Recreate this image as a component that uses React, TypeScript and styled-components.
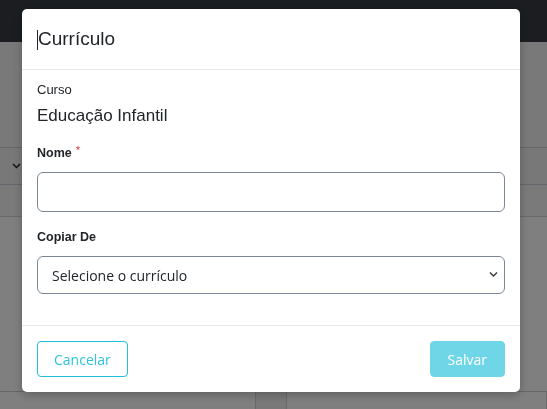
import React from 'react';
import styled, { createGlobalStyle } from 'styled-components';

const GlobalStyle = createGlobalStyle`
  html, body {
    margin: 0;
    padding: 0;
    height: 100%;
  }
  body {
    font-family: "Liberation Sans", Arial, sans-serif;
    color: #212529;
    background: #ffffff;
    overflow: hidden;
  }
`;

const Page = styled.div`
  display: flex;
  flex-direction: column;
  height: 409px;
`;

const Navbar = styled.div`
  height: 42px;
  background: #363b41;
`;

const PageHeader = styled.div`
  height: 105px;
  background: #f3f3f3;
  border-bottom: 1px solid #c6ced6;
`;

const Toolbar = styled.div`
  height: 36px;
  display: flex;
  align-items: center;
  padding-left: 12px;
  background: #f1f1f1;
  border-bottom: 1px solid #c6ced6;
  color: #333;
`;

const FilterRow = styled.div`
  height: 31px;
  background: #f5f5f5;
  border-bottom: 1px solid #d0d5da;
`;

const Content = styled.div`
  flex: 1;
  display: flex;
  flex-direction: column;
  justify-content: flex-end;
  background: #ffffff;
`;

const TableRow = styled.div`
  height: 17px;
  display: grid;
  grid-template-columns: 256px 31px 1fr;
  border-top: 1px solid #cfcfcf;
`;

const TableCell = styled.div<{ $shade?: boolean }>`
  background: ${p => (p.$shade ? '#f3f3f3' : '#ffffff')};
  border-right: 1px solid #d4d4d4;
`;

const Backdrop = styled.div`
  position: fixed;
  inset: 0;
  background: rgba(0, 0, 0, 0.5);
  display: flex;
  align-items: flex-start;
`;

const Modal = styled.div`
  width: 498px;
  margin: 9px 0 0 22px;
  background: #ffffff;
  border-radius: 5px;
  box-shadow: 0 3px 10px rgba(0, 0, 0, 0.25);
  display: flex;
  flex-direction: column;
`;

const ModalHeader = styled.div`
  height: 60px;
  display: flex;
  align-items: center;
  padding: 0 15px;
  border-bottom: 1px solid #e9ecef;
`;

const Caret = styled.span`
  width: 1px;
  height: 20px;
  background: #212529;
  margin-top: 2px;
`;

const Title = styled.h5`
  margin: 0;
  font-size: 19px;
  font-weight: 400;
  line-height: 28px;
  color: #212529;
`;

const ModalBody = styled.div`
  display: flex;
  flex-direction: column;
  padding: 12px 15px 31px;
`;

const SmallLabel = styled.div`
  font-size: 13px;
  line-height: 16px;
  color: #212529;
`;

const ValueText = styled.div`
  font-size: 17px;
  line-height: 20px;
  margin-top: 8px;
  color: #212529;
`;

const Label = styled.label<{ $top: number }>`
  display: block;
  font-size: 12.5px;
  line-height: 16px;
  font-weight: 700;
  color: #212529;
  margin-top: ${p => p.$top}px;
  margin-bottom: 11px;
`;

const Required = styled.span`
  color: #e3342f;
  font-weight: 400;
  font-size: 11px;
  vertical-align: top;
  margin-left: 4px;
  position: relative;
  top: -3px;
`;

const TextInput = styled.input`
  box-sizing: border-box;
  width: 100%;
  height: 40px;
  border: 1px solid #7b8794;
  border-radius: 6px;
  padding: 0 15px;
  font-family: "Open Sans", sans-serif;
  font-size: 14px;
  outline: none;
  background: #fff;
`;

const SelectWrap = styled.div`
  position: relative;
`;

const Select = styled.select`
  box-sizing: border-box;
  width: 100%;
  height: 38px;
  border: 1px solid #7b8794;
  border-radius: 6px;
  padding: 0 30px 0 14px;
  font-family: "Open Sans", sans-serif;
  font-size: 14px;
  color: #212529;
  background: #fff;
  appearance: none;
  -webkit-appearance: none;
  outline: none;
`;

const Chevron = styled.svg`
  position: absolute;
  right: 7px;
  top: 15px;
  width: 9px;
  height: 7px;
  pointer-events: none;
`;

const ModalFooter = styled.div`
  display: flex;
  justify-content: space-between;
  align-items: center;
  padding: 15px;
  border-top: 1px solid #e9ecef;
`;

const Button = styled.button<{ $variant: 'outline' | 'solid' }>`
  box-sizing: border-box;
  height: 36px;
  padding: 0 ${p => (p.$variant === 'outline' ? 16 : 17)}px;
  border-radius: 4px;
  font-family: "Open Sans", sans-serif;
  font-size: 14px;
  border: 1px solid ${p => (p.$variant === 'outline' ? '#1ec0dc' : '#6fd6e8')};
  background: ${p => (p.$variant === 'outline' ? '#ffffff' : '#6fd6e8')};
  color: ${p => (p.$variant === 'outline' ? '#2ec2dc' : '#ffffff')};
`;

const App: React.FC = () => {
  return (
    <>
      <GlobalStyle />
      <Page>
        <Navbar />
        <PageHeader />
        <Toolbar>
          <svg width="9" height="6" viewBox="0 0 9 6">
            <path d="M1 1l3.5 3.5L8 1" fill="none" stroke="#222" strokeWidth="1.5" />
          </svg>
        </Toolbar>
        <FilterRow />
        <Content>
          <TableRow>
            <TableCell />
            <TableCell $shade />
            <TableCell />
          </TableRow>
        </Content>
      </Page>
      <Backdrop>
        <Modal>
          <ModalHeader>
            <Caret />
            <Title>Currículo</Title>
          </ModalHeader>
          <ModalBody>
            <SmallLabel>Curso</SmallLabel>
            <ValueText>Educação Infantil</ValueText>
            <Label $top={19}>
              Nome<Required>*</Required>
            </Label>
            <TextInput type="text" />
            <Label $top={17}>Copiar De</Label>
            <SelectWrap>
              <Select defaultValue="">
                <option value="">Selecione o currículo</option>
              </Select>
              <Chevron viewBox="0 0 9 7">
                <path d="M1 1.5l3.5 3.5L8 1.5" fill="none" stroke="#343a40" strokeWidth="1.4" />
              </Chevron>
            </SelectWrap>
          </ModalBody>
          <ModalFooter>
            <Button $variant="outline">Cancelar</Button>
            <Button $variant="solid">Salvar</Button>
          </ModalFooter>
        </Modal>
      </Backdrop>
    </>
  );
};

export default App;
